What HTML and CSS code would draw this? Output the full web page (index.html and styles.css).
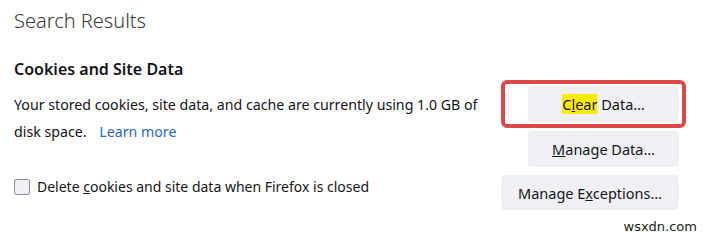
FILE: index.html
```html
<!doctype html>
<html lang="en">
<head>
    <meta charset="UTF-8">
    <title>Search Results</title>
    <link rel="stylesheet" href="styles.css">
</head>
<body>
<div class="pane">
    <h1 class="title">Search Results</h1>
    <h2 class="group-title">Cookies and Site Data</h2>
    <div class="rows">
        <p class="desc">
            <span>Your stored cookies, site data, and cache are currently using 1.0 GB of disk space.</span>
            <a class="learn" href="#">Learn more</a>
        </p>
        <div class="mark">
            <button class="btn"><span class="hl">C<u>l</u>ear</span> Data…</button>
        </div>
        <div class="cell">
            <button class="btn"><u>M</u>anage Data…</button>
        </div>
        <label class="check">
            <span class="box"></span>
            <span>Delete <u>c</u>ookies and site data when Firefox is closed</span>
        </label>
        <div class="cell last">
            <button class="btn wide">Manage E<u>x</u>ceptions…</button>
        </div>
    </div>
</div>
<div class="wm">wsxdn.com</div>
</body>
</html>
```

FILE: styles.css
```css
* {
    margin: 0;
    padding: 0;
    box-sizing: border-box;
}

body {
    background-color: #fff;
    color: #15141a;
    font-family: "Noto Sans", "Open Sans", sans-serif;
    font-size: 14px;
    width: 708px;
    height: 238px;
    overflow: hidden;
    position: relative;
}

.pane {
    padding: 7px 29px 0 14px;
}

.title {
    font-size: 20px;
    font-weight: 300;
    color: #3a3a40;
    line-height: 28px;
}

.group-title {
    font-size: 16px;
    font-weight: 600;
    margin-top: 23px;
    line-height: 22px;
}

.rows {
    display: grid;
    grid-template-columns: 1fr auto;
    column-gap: 16px;
    align-items: start;
}

.desc {
    grid-row: span 2;
    font-size: 14.2px;
    line-height: 27px;
    padding-top: 11px;
    max-width: 480px;
}

.learn {
    color: #2a6bc0;
    text-decoration: none;
    margin-left: 9px;
}

.cell,
.mark {
    display: flex;
    justify-content: flex-end;
}

.mark {
    border: 4px solid #dc4848;
    border-radius: 6px;
    padding: 2px 3px 2px 7px;
    margin-right: -7px;
}

.cell {
    margin-top: 3px;
}

.cell.last {
    margin-top: 8px;
}

.btn {
    font: inherit;
    font-size: 14.5px;
    color: #15141a;
    background-color: #f0f0f4;
    border: none;
    border-radius: 4px;
    width: 151px;
    height: 36px;
}

.btn.wide {
    width: 178px;
    height: 35px;
}

.hl {
    background-color: #ffeb00;
}

.check {
    display: flex;
    align-items: center;
    gap: 7px;
    margin-top: 10px;
}

.box {
    width: 16px;
    height: 16px;
    border: 1px solid #8f8f9d;
    border-radius: 2px;
    background-color: #f0f0f4;
}

.wm {
    position: absolute;
    right: 11px;
    bottom: 4px;
    font-family: "DejaVu Sans", sans-serif;
    font-size: 13px;
    color: #222;
}
```
